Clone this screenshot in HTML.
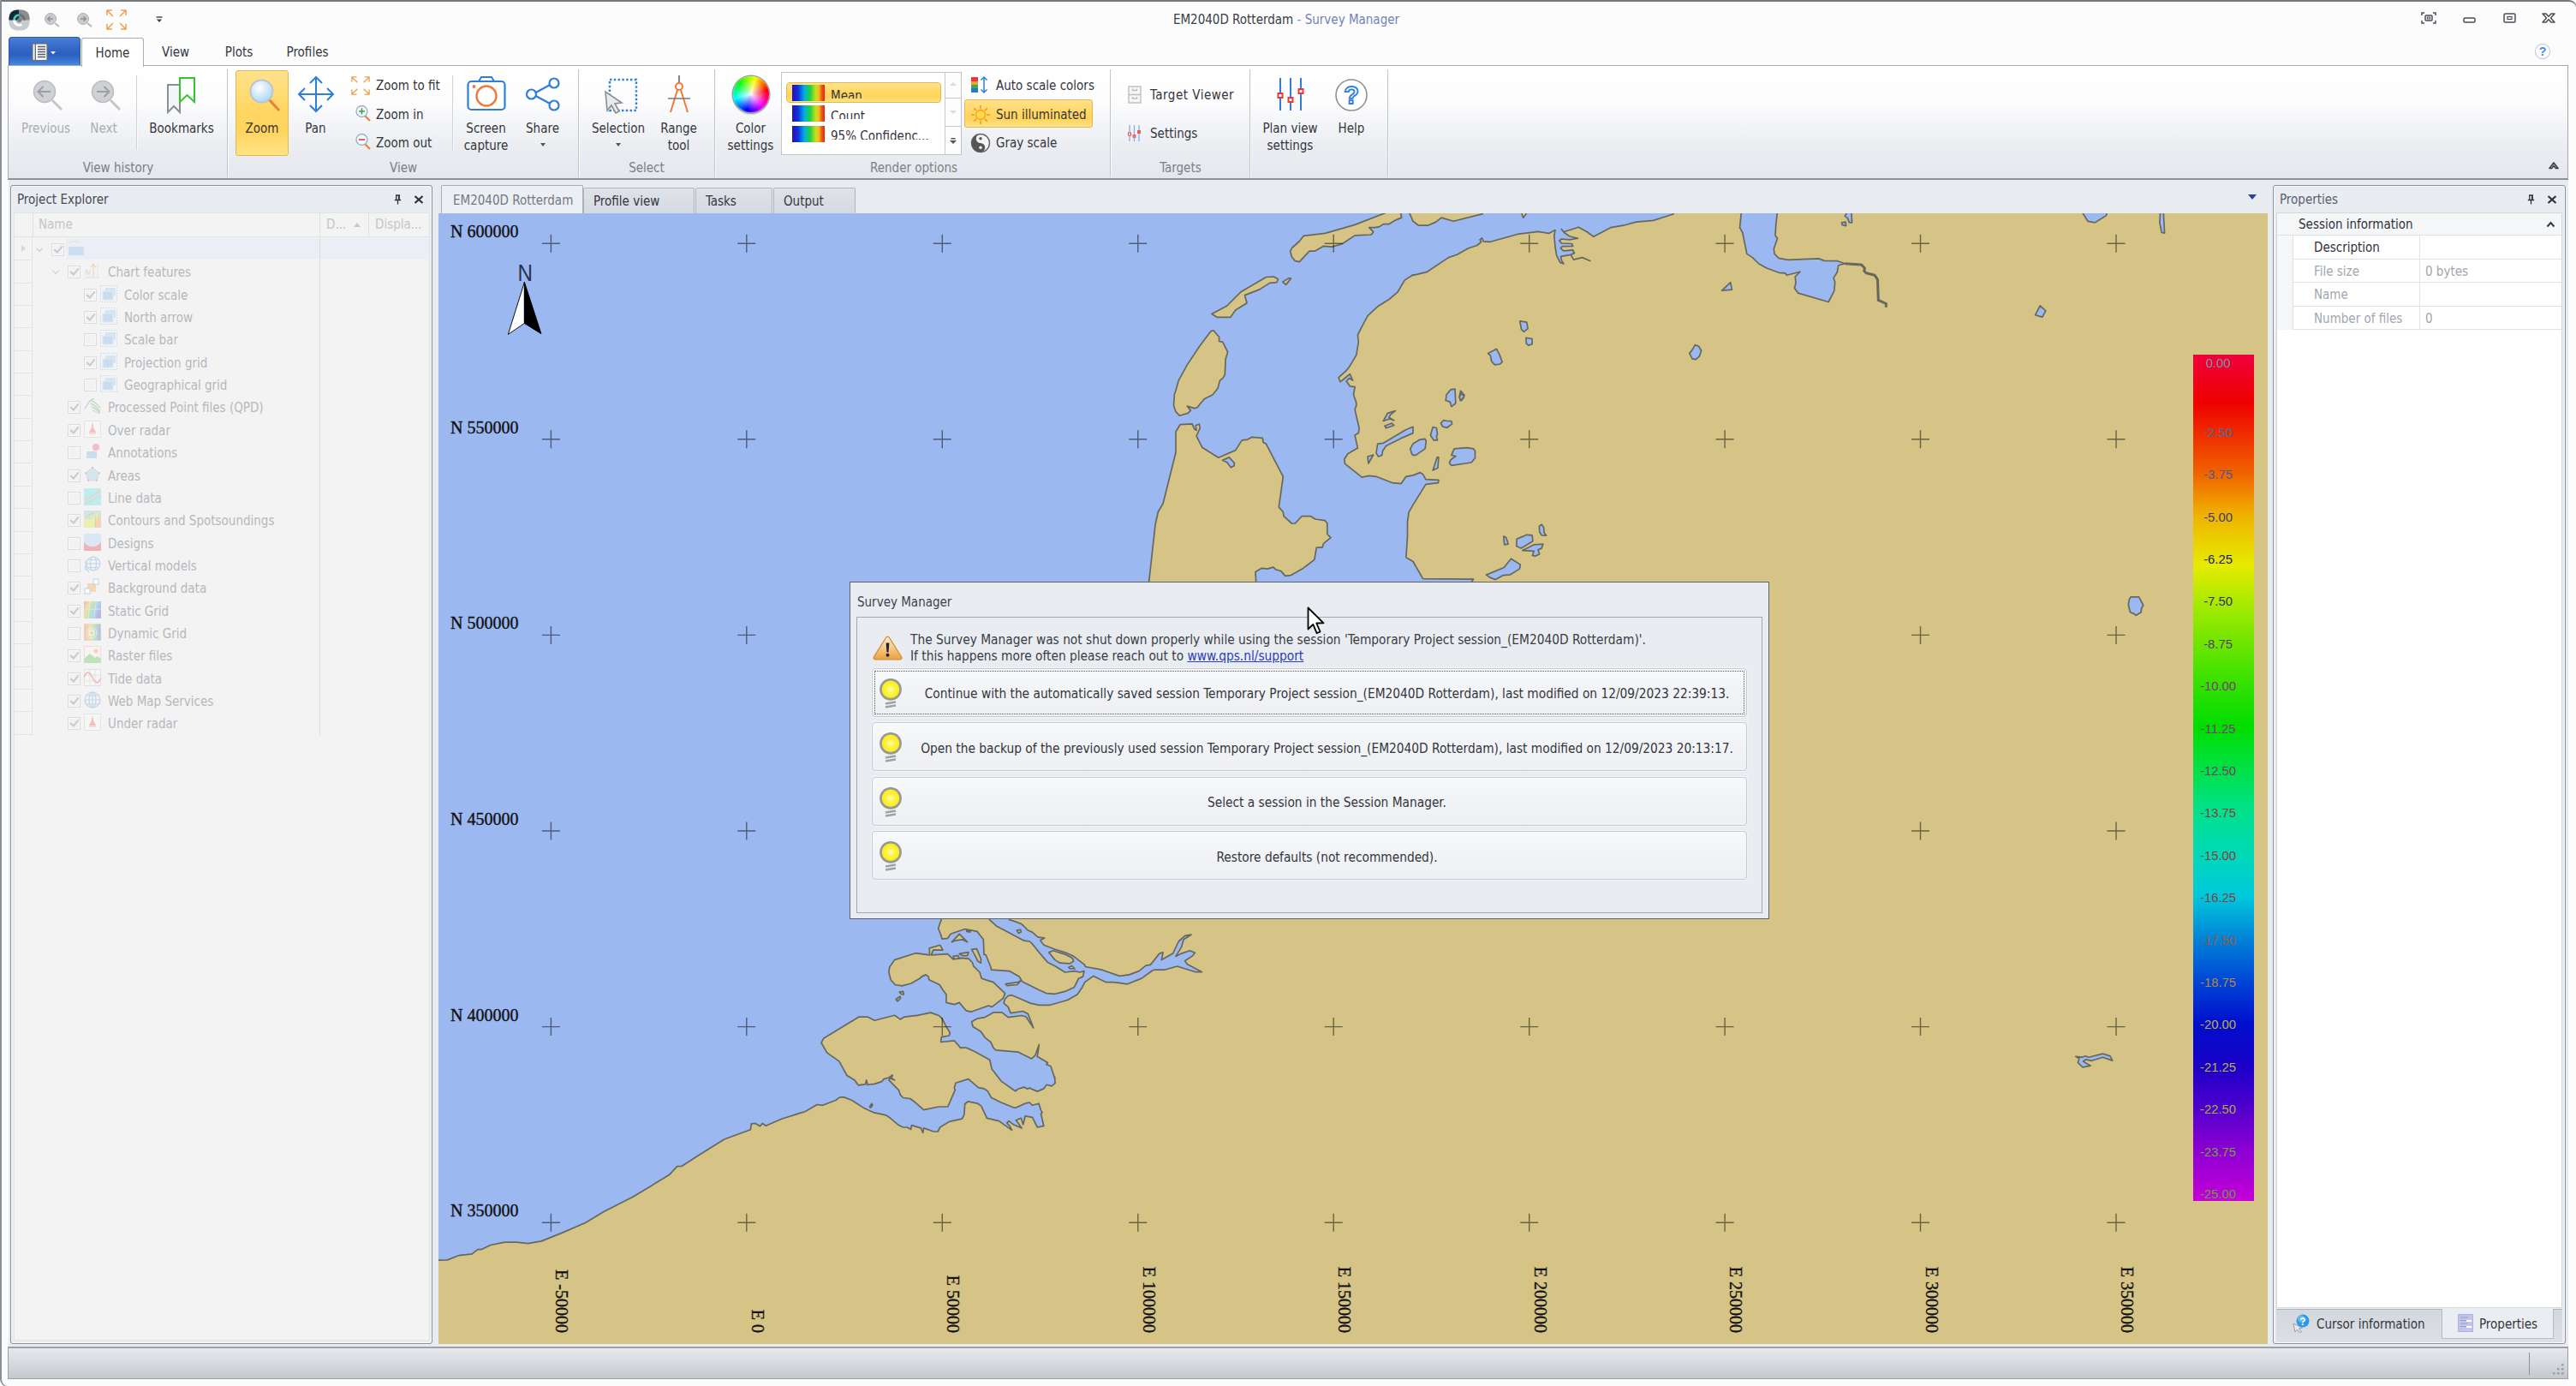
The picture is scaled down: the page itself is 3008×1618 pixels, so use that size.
<!DOCTYPE html><html><head><meta charset="utf-8"><title>Survey Manager</title><style>
html,body{margin:0;padding:0;background:#fcfcfc}
body{width:3008px;height:1618px;position:relative;overflow:hidden;font-family:"DejaVu Sans Condensed","Liberation Sans",sans-serif;font-size:15px}
.map{position:absolute}
#cs{position:absolute;font-family:"Liberation Sans",sans-serif;font-size:14.8px}
#cs span{position:absolute;left:-6.5px;width:100%;text-align:center;line-height:20px}

#frame{position:absolute;left:0;top:0;width:3006px;height:1616px;border:1px solid #9a9da2;border-top:2px solid #74787e;border-left:2px solid #8b8f95;border-radius:0 9px 0 9px;background:#fcfcfc}
#titlebar{position:absolute;left:0;top:0;width:3008px;height:44px}
.ttl{position:absolute;left:1102px;top:13px;width:800px;text-align:center;font-size:15px;line-height:20px;white-space:pre}
#tabs{position:absolute;left:0;top:44px;width:3008px;height:33px}
.filebtn{position:absolute;left:10px;top:-1px;width:84px;height:33px;border:1px solid #2a57ae;border-bottom:none;border-radius:4px 4px 0 0;background:linear-gradient(#4a7ed6,#3367c6 40%,#2c5fbe 62%,#4787e0);box-sizing:border-box}
.filebtn svg{position:absolute;left:26px;top:6px}
.tab{position:absolute;top:0;height:33px;line-height:34.5px;text-align:center;font-size:15px;color:#33363c;box-sizing:border-box}
.tab.act{border:1px solid #a9adb4;border-bottom:none;background:#fff;border-radius:3px 3px 0 0;height:34px;z-index:3}
#ribbon{position:absolute;left:9px;top:76px;width:2990px;height:134px;border:1px solid #a4a8af;border-bottom:2px solid #8d9198;box-sizing:border-box;background:linear-gradient(#fff 0,#fdfdfe 30%,#eceef2 70%,#e4e7ec 100%);font-size:15px;color:#33363c}
.gsep{position:absolute;top:4px;height:126px;width:1px;background:#c2c6cc;box-shadow:1px 0 0 #fafbfc}
.isep{position:absolute;top:11px;height:87px;width:1px;background:#d0d3d8;box-shadow:1px 0 0 #fafbfc}
.glab{position:absolute;top:109.5px;width:200px;text-align:center;line-height:19px;color:#7b7f87;white-space:nowrap}
.big{position:absolute;top:1px;width:120px;height:110px;text-align:center}
.big .ic{position:absolute;left:0;top:7px;width:120px;height:50px;display:flex;align-items:center;justify-content:center}
.big .lb{position:absolute;left:0;top:63px;width:120px;line-height:19.5px;white-space:nowrap}
.big.dis .lb{color:#a9adb3}
.dd{display:inline-block;width:0;height:0;border:3.5px solid transparent;border-top:4px solid #555;border-bottom:none;vertical-align:middle;position:relative;top:-1.5px}
.hl{position:absolute;border:1px solid #e3b851;border-radius:3px;background:linear-gradient(#ffe28c,#ffd764 45%,#ffd35c 70%,#ffe385);box-sizing:border-box}
.sm{position:absolute;height:26px;line-height:26px;white-space:nowrap}
.sm svg{position:absolute;left:0;top:1px}
.sm span{position:absolute;left:30px;top:0}
.sm.tv span{left:29px}
.wheel{width:42px;height:42px;border-radius:50%;background:radial-gradient(circle,#fff 0,rgba(255,255,255,.75) 12%,rgba(255,255,255,0) 60%),conic-gradient(from 75deg,#f00,#f0f,#00f,#0ff,#0f0,#ff0,#f00);box-shadow:0 0 0 1.5px #9a9da2,0 2px 2px #888}
.gal{position:absolute;left:902px;top:6.5px;width:211px;height:97px;border:1px solid #bfc3ca;background:#fff;box-sizing:border-box;overflow:hidden}
.gsel{position:absolute;left:5px;top:11px;width:181px;height:24px;border:1px solid #e3b851;border-radius:4px;box-sizing:border-box;background:linear-gradient(#ffe28c,#ffd764 45%,#ffd35c 70%,#ffe385)}
.gw{position:absolute;left:12px;width:38px;height:19px;background:linear-gradient(90deg,#2a10b0,#1030e0 18%,#00b0e0 38%,#20d040 55%,#c0e020 72%,#f0c020 82%,#f06010 90%,#e02020)}
.gt{position:absolute;left:57px;line-height:18px;overflow:hidden;white-space:nowrap}
.gsc{position:absolute;right:0;top:0;width:18px;height:95px;border-left:1px solid #c5c9cf;background:#fdfdfe}
.gsc b{position:absolute;left:0;width:18px;border-bottom:1px solid #c5c9cf;box-sizing:border-box}
.gsc u{position:absolute;left:5px;top:50%;width:0;height:0;border:4px solid transparent}
.gsc .up{border-bottom:4px solid #d9dbdf;margin-top:-7px}
.gsc .dn{border-top:4px solid #d9dbdf;margin-top:-2px}
.gsc .mo{border-top:4px solid #555;margin-top:0;box-shadow:0 -3px 0 -1.5px #fff,0 -4.5px 0 -1.5px #555}

#work{position:absolute;left:10px;top:210px;width:2989px;height:1363px;background:#e8ebf0}
#lp,#rp{position:absolute;top:216px;height:1353px;border:1px solid #8d929a;border-radius:3px;background:#e9ecf1;box-sizing:border-box;box-shadow:inset 0 0 0 1px #f6f7f9;font-size:15px}
#lp{left:12px;width:493px}
#rp{left:2654px;width:342px}
.ph{position:absolute;left:7px;top:6px;line-height:20px;color:#474b55}
#rp .ph{color:#5b6072}
.pin{position:absolute;width:9px;height:12px}
.tree{position:absolute;left:3px;top:31px;width:486px;height:1317px;background:#f3f3f3;border:1px solid #e2e4e8;box-sizing:border-box;overflow:hidden}
.th{position:absolute;left:0;top:0;width:486px;height:28px;border-bottom:1px solid #e0e1e4;box-sizing:border-box;color:#c3c6cb}
.th span{position:absolute;top:3px;line-height:20px}
.th b{position:absolute;top:0;width:1px;height:27px;background:#e0e1e4}
.sa{position:absolute;left:396px;top:11px;border:4px solid transparent;border-bottom:5px solid #c6c9ce;border-top:none}
.rows{position:absolute;left:0;top:29px;width:486px;height:581px}
.tr{position:absolute;left:0;width:486px;height:26.35px;color:#b5b8bd;white-space:nowrap}
.tr::before{content:"";position:absolute;left:0;top:0;width:21px;height:26.35px;border-right:1px solid #e2e3e6;border-bottom:1px solid #e2e3e6;box-sizing:border-box}
.tr span{position:absolute;top:4px;line-height:20px}
.tr .sel{position:absolute;left:60px;top:0;width:426px;height:25px;background:#ebeff5}
.ex{position:absolute;left:8px;top:8px;border:4.5px solid transparent;border-left:5px solid #d4d6da;border-right:none}
.cv{position:absolute;top:9px;width:6px;height:6px;border-right:1.6px solid #c8cace;border-bottom:1.6px solid #c8cace;transform:rotate(45deg) scale(.95);box-sizing:border-box}
.cb{position:absolute;top:6px;width:15px;height:15px;border:1px solid #dcdde0;background:#f2f2f2;box-sizing:border-box;box-shadow:inset 0 0 0 1px #f8f8f8}
.cb.on::after{content:"";position:absolute;left:4px;top:0px;width:4px;height:8px;border-right:2px solid #c9cacd;border-bottom:2px solid #c9cacd;transform:rotate(40deg)}
.ico{position:absolute;top:2px;width:20px;height:20px}
.ico svg{width:20px;height:20px;display:block;opacity:.85}
.vline{position:absolute;left:356px;top:0;width:1px;height:580px;background:#dcdde0}
#ctabs{position:absolute;left:512px;top:216px;width:2136px;height:34px;font-size:15px}
.ct{position:absolute;top:3px;height:30px;line-height:31px;padding-left:11px;box-sizing:border-box;border:1px solid #b1b5bd;border-bottom:none;background:linear-gradient(#dfe2e8,#d5d9e0);color:#33363c;border-radius:2px 2px 0 0}
.ct.act{top:0;height:34px;line-height:35px;padding-left:13px;background:#eceff3;color:#737885;border-color:#a9adb5}
.pg{position:absolute;left:3px;top:31px;width:334px;height:1279px;background:#fff;border:1px solid #d4d7dc;box-sizing:border-box;overflow:hidden}
.cat{position:absolute;left:0;top:0;width:334px;height:26px;line-height:27px;padding-left:25px;box-sizing:border-box;background:#f5f6f8;color:#2f3238;border-bottom:1px solid #dfe1e5}
.pr{position:absolute;left:0;width:334px;height:27.5px;border-bottom:1px solid #dfe1e5;box-sizing:border-box}
.pr::before{content:"";position:absolute;left:0;top:0;width:19px;height:27.5px;background:#f5f6f8;border-right:1px solid #dfe1e5;box-sizing:border-box}
.pr .n{position:absolute;left:43px;top:4px;line-height:20px;color:#a2a6ae}
.pr .n.dk{color:#2f3040}
.pr .v{position:absolute;left:166px;top:0;height:26px;line-height:28px;padding-left:6px;border-left:1px solid #dfe1e5;color:#a2a6ae}
.btabs{position:absolute;left:3px;top:1311px;width:334px;height:38px;background:linear-gradient(#d3d7de,#dcdfe5);border-top:1px solid #aeb2ba}
.bt{position:absolute;top:0;height:34px;color:#33363c;white-space:nowrap}
.bt.act span{top:8px}.bt.act{background:#eaedf1;border:1px solid #b7bbc3;border-top:none;box-sizing:border-box;top:-1px;height:35px}
.bt svg{position:absolute}
.bt span{position:absolute;top:7px;line-height:20px}
#sb{position:absolute;left:9px;top:1572px;width:2990px;height:38px;border:1px solid #9a9ea6;border-top:2px solid #9da1a9;box-sizing:border-box;background:linear-gradient(#e6e8ec,#d9dce1 40%,#c4c7cd)}
#sb .sep{position:absolute;left:2943px;top:5px;width:1px;height:26px;background:#8e9299}
#dlg{position:absolute;left:992px;top:679px;width:1074px;height:394px;border:1px solid #5f646c;background:#e9ecf0;box-sizing:border-box;font-size:15px;color:#33363c}
.dt{position:absolute;left:8px;top:13px;line-height:20px;color:#3f434b}
.di{position:absolute;left:7px;top:40px;width:1058px;height:346px;font-size:15.3px;border:1px solid #a3a7ae;box-sizing:border-box;background:#e9ecf0}
.wi{position:absolute;left:18px;top:20.5px}
.msg{position:absolute;left:62px;top:17px;line-height:19.2px;white-space:nowrap;color:#3a3d44}
.msg u{color:#2a3fb8}
.db{position:absolute;left:17px;width:1022px;height:57px;border:1px solid #c6cad1;border-radius:4px;box-sizing:border-box;background:linear-gradient(#f8f9fb,#f1f3f6 50%,#eef0f4);box-shadow:0 0 0 1px #f4f5f7}
.db.foc::after{content:"";position:absolute;left:2px;top:2px;right:2px;bottom:2px;border:1px dotted #555}
.bi{position:absolute;left:7.2px;top:10px}
.db span{position:absolute;left:41px;right:0;top:19.5px;line-height:20px;text-align:center;white-space:nowrap}
#cur{position:absolute;left:1526px;top:708px}
</style></head><body>
<div id="frame"></div>
<div id="titlebar">
  <svg style="position:absolute;left:10px;top:11px" width="25" height="25" viewBox="0 0 25 25"><defs><clipPath id="ai"><rect x="0.5" y="0.5" width="24" height="24" rx="9"/></clipPath></defs><g clip-path="url(#ai)"><rect width="25" height="25" fill="#c9cacc"/><rect width="12.5" height="12.5" fill="#0e2b3f"/><rect x="12.5" width="12.5" height="12.5" fill="#8b8e91"/><path d="M12.5,6.5a6,6 0 0 0 -6,6" stroke="#3fd0b6" stroke-width="2.6" fill="none"/><path d="M6.5,12.5a6,6 0 0 0 9,5.2" stroke="#fff" stroke-width="2.6" fill="none"/><path d="M12.5,6.5a6,6 0 0 1 6,6" stroke="#6d7073" stroke-width="2.6" fill="none"/><circle cx="12.5" cy="12.5" r="2.6" fill="#7d8083"/></g></svg>
  <svg style="position:absolute;left:51px;top:14px" width="20" height="18" viewBox="0 0 20 18"><circle cx="8" cy="8" r="6.5" fill="#c9cbce" stroke="#aeb1b5"/><path d="M13,13l5,4" stroke="#b5b8bc" stroke-width="2"/><path d="M11,8H5M7.5,5.2L4.7,8l2.8,2.8" stroke="#8e9196" stroke-width="1.4" fill="none"/></svg>
  <svg style="position:absolute;left:89px;top:14px" width="20" height="18" viewBox="0 0 20 18"><circle cx="8" cy="8" r="6.5" fill="#c9cbce" stroke="#aeb1b5"/><path d="M13,13l5,4" stroke="#b5b8bc" stroke-width="2"/><path d="M5,8h6M8.5,5.2L11.3,8l-2.8,2.8" stroke="#8e9196" stroke-width="1.4" fill="none"/></svg>
  <svg style="position:absolute;left:124px;top:11px" width="24" height="24" viewBox="0 0 24 24" fill="none" stroke="#f0a050" stroke-width="1.5"><path d="M1,7V1h6M1,1l7,7M17,1h6v6M23,1l-7,7M1,17v6h6M1,23l7-7M23,17v6h-6M23,23l-7-7"/></svg>
  <svg style="position:absolute;left:182px;top:19px" width="8" height="8" viewBox="0 0 8 8"><path d="M0.5,1h7" stroke="#444" stroke-width="1.4"/><path d="M0.8,3.5h6.4L4,7z" fill="#444"/></svg>
  <div class="ttl"><span style="color:#3a3d44">EM2040D Rotterdam</span><span style="color:#7f8db3"> - </span><span style="color:#6f84b6">Survey Manager</span></div>
  <svg style="position:absolute;left:2827px;top:14px" width="18" height="14" viewBox="0 0 18 14" fill="none" stroke="#4a4e55" stroke-width="1.5"><path d="M1,4V1h3M14,1h3v3M17,10v3h-3M4,13H1v-3"/><rect x="5" y="4" width="8" height="6" rx="1"/><rect x="7.3" y="6" width="3.4" height="2" stroke-width="1"/></svg>
  <svg style="position:absolute;left:2876px;top:20px" width="15" height="7" viewBox="0 0 15 7" fill="none" stroke="#4a4e55" stroke-width="1.5"><rect x="1" y="1" width="13" height="5" rx="1.5"/></svg>
  <svg style="position:absolute;left:2923px;top:15px" width="15" height="12" viewBox="0 0 15 12" fill="none" stroke="#4a4e55" stroke-width="1.5"><rect x="1" y="1" width="13" height="10" rx="1.5"/><rect x="5" y="4.5" width="5" height="3" stroke-width="1.2"/></svg>
  <svg style="position:absolute;left:2968px;top:15px" width="16" height="12" viewBox="0 0 16 12" fill="none" stroke="#4a4e55" stroke-width="1.5" stroke-linejoin="round"><path d="M1,1h4l3,3.3L11,1h4l-4.5,5L15,11h-4L8,7.7 5,11H1l4.5-5z"/></svg>
</div>
<div id="tabs">
  <div class="filebtn"><svg width="30" height="22" viewBox="0 0 30 22"><rect x="1" y="1" width="17" height="19.5" fill="#fafbfd" stroke="#6a6d72" stroke-width="1.2"/><path d="M4.3,1v19.5" stroke="#6a6d72" stroke-width="1.4"/><path d="M7,4.5h9M7,7.5h9M7,10.5h9M7,13.5h9M7,16.5h9" stroke="#555a63" stroke-width="1.3"/><path d="M22,10h6l-3,3.4z" fill="#f4f6fa"/></svg></div>
  <div class="tab act" style="left:95px;width:73px">Home</div>
  <div class="tab" style="left:168px;width:74px">View</div>
  <div class="tab" style="left:242px;width:74px">Plots</div>
  <div class="tab" style="left:316px;width:86px">Profiles</div>
  <svg style="position:absolute;left:2959px;top:6px" width="20" height="20" viewBox="0 0 20 20"><circle cx="10" cy="10" r="8.6" fill="#fdfdff" stroke="#c9cdd6" stroke-width="1.2"/><text x="10" y="15" font-size="14" font-weight="bold" text-anchor="middle" fill="#3a8ee6" font-family="Liberation Sans, sans-serif">?</text></svg>
</div>
<div id="ribbon">
<div class="gsep" style="left:255px"></div>
<div class="gsep" style="left:664.5px"></div>
<div class="gsep" style="left:824px"></div>
<div class="gsep" style="left:1286px"></div>
<div class="gsep" style="left:1448.5px"></div>
<div class="gsep" style="left:1610px"></div>
<div class="isep" style="left:149px"></div>
<div class="isep" style="left:518px"></div>
<div class="glab" style="left:28px">View history</div>
<div class="glab" style="left:361px">View</div>
<div class="glab" style="left:645px">Select</div>
<div class="glab" style="left:957px">Render options</div>
<div class="glab" style="left:1268.5px">Targets</div>
<div class="big dis" style="left:-16.5px"><div class="ic"><svg style="margin-top:3px;margin-left:5px" width="38" height="40" viewBox="0 0 38 40"><circle cx="15" cy="15" r="12.5" fill="#cfd1d4" stroke="#b9bcc0" stroke-width="1.5"/><path d="M24,25l11,11" stroke="#c4c6ca" stroke-width="3"/><path d="M22,15H8M13.5,9L7.5,15l6,6" stroke="#9c9fa4" stroke-width="2" fill="none"/></svg></div><div class="lb">Previous</div></div>
<div class="big dis" style="left:51px"><div class="ic"><svg style="margin-top:3px;margin-left:5px" width="38" height="40" viewBox="0 0 38 40"><circle cx="15" cy="15" r="12.5" fill="#cfd1d4" stroke="#b9bcc0" stroke-width="1.5"/><path d="M24,25l11,11" stroke="#c4c6ca" stroke-width="3"/><path d="M8,15h14M16.5,9l6,6-6,6" stroke="#9c9fa4" stroke-width="2" fill="none"/></svg></div><div class="lb">Next</div></div>
<div class="big " style="left:142px"><div class="ic"><svg style="margin-top:1px" width="36" height="44" viewBox="0 0 36 44" fill="none" stroke-width="2"><path d="M2,10h14v32l-7-7-7,7z" stroke="#8c8f94" fill="#f4f5f7"/><path d="M16,2h17v28l-8.5-8-8.5,8z" stroke="#33c52e" fill="#fbfffb"/></svg></div><div class="lb">Bookmarks</div></div>
<div class="hl" style="left:265px;top:5px;width:62px;height:100px"></div>
<div class="big " style="left:236px"><div class="ic"><svg style="margin-top:3.5px;margin-left:5px" width="38" height="42" viewBox="0 0 38 42"><defs><radialGradient id="zg" cx=".4" cy=".35" r=".7"><stop offset="0" stop-color="#fff"/><stop offset="1" stop-color="#a9d4f3"/></radialGradient></defs><path d="M24,25l12,13" stroke="#e8823a" stroke-width="3.2"/><circle cx="15.5" cy="15.5" r="13" fill="url(#zg)" stroke="#b9c6d2" stroke-width="2"/></svg></div><div class="lb">Zoom</div></div>
<div class="big " style="left:298.5px"><div class="ic"><svg width="44" height="44" viewBox="0 0 44 44" fill="none" stroke="#2f7fd8" stroke-width="2"><path d="M22,2v40M2,22h40M15,9l7-7 7,7M15,35l7,7 7-7M9,15l-7,7 7,7M35,15l7,7-7,7"/></svg></div><div class="lb">Pan</div></div>
<div class="big " style="left:497.5px"><div class="ic"><svg style="margin-top:-2px" width="46" height="42" viewBox="0 0 46 42" fill="none"><path d="M14,7l3-5h12l3,5" stroke="#2f7fd8" stroke-width="2"/><rect x="1.5" y="7" width="43" height="33" rx="4" stroke="#2f7fd8" stroke-width="2.2" fill="#fff"/><circle cx="23" cy="24" r="11.5" stroke="#f07a3c" stroke-width="2.4"/><circle cx="8.5" cy="13" r="2" fill="#f07a3c"/></svg></div><div class="lb">Screen<br>capture</div></div>
<div class="big " style="left:563.5px"><div class="ic"><svg width="42" height="40" viewBox="0 0 42 40" fill="none" stroke="#2f7fd8" stroke-width="2.2"><path d="M9,20L33,7M9,20l24,13"/><circle cx="34" cy="7" r="5.5" fill="#fff"/><circle cx="7.5" cy="20" r="5.5" fill="#fff"/><circle cx="34" cy="33" r="5.5" fill="#fff"/></svg></div><div class="lb">Share<br><span class="dd"></span></div></div>
<div class="big " style="left:652px"><div class="ic"><svg style="margin-top:3px;margin-left:6px" width="40" height="42" viewBox="0 0 40 42" fill="none"><rect x="7" y="2" width="31" height="36" stroke="#2f7fd8" stroke-width="2.4" stroke-dasharray="2.4 2.4"/><path d="M2,16l2,22 5-6 5,9 4-2-5-9 8-1z" fill="#e9eaec" stroke="#8a8d92" stroke-width="1.6"/></svg></div><div class="lb">Selection<br><span class="dd"></span></div></div>
<div class="big " style="left:722.5px"><div class="ic"><svg width="30" height="46" viewBox="0 0 30 46" fill="none"><path d="M15,1v9" stroke="#666" stroke-width="1.6"/><circle cx="15" cy="14" r="4" stroke="#f07a3c" stroke-width="2"/><path d="M13,18L5,44M17,18l8,26" stroke="#f07a3c" stroke-width="2"/><path d="M2,28h26" stroke="#777" stroke-width="1.5"/></svg></div><div class="lb">Range<br>tool</div></div>
<div class="big " style="left:806.5px"><div class="ic"><div class="wheel"></div></div><div class="lb">Color<br>settings</div></div>
<div class="big " style="left:1436.5px"><div class="ic"><svg width="34" height="42" viewBox="0 0 34 42" fill="none"><path d="M5,2v38M17,2v38M29,2v38" stroke="#2f7fd8" stroke-width="2"/><rect x="2.5" y="20" width="5" height="5" fill="#fff" stroke="#e8383c" stroke-width="2"/><rect x="14.5" y="25" width="5" height="5" fill="#fff" stroke="#e8383c" stroke-width="2"/><rect x="26.5" y="15" width="5" height="5" fill="#fff" stroke="#e8383c" stroke-width="2"/></svg></div><div class="lb">Plan view<br>settings</div></div>
<div class="big " style="left:1508px"><div class="ic"><svg style="margin-top:2px" width="40" height="40" viewBox="0 0 40 40"><circle cx="20" cy="20" r="18" fill="#fff" stroke="#8e9196" stroke-width="1.6"/><text x="20" y="30" font-size="29" font-weight="bold" text-anchor="middle" fill="#fff" stroke="#2f7fd8" stroke-width="1.8" font-family="Liberation Sans, sans-serif">?</text></svg></div><div class="lb">Help</div></div>
<div class="sm " style="left:399px;top:10px"><svg style="left:1px;top:2px" width="22" height="22" viewBox="0 0 24 24" fill="none" stroke="#f0a050" stroke-width="1.5"><path d="M1,7V1h6M1,1l7,7M17,1h6v6M23,1l-7,7M1,17v6h6M1,23l7-7M23,17v6h-6M23,23l-7-7"/></svg><span>Zoom to fit</span></div>
<div class="sm " style="left:399px;top:43.5px"><svg style="left:4px" width="24" height="20" viewBox="0 0 24 20"><path d="M13,13l6,6" stroke="#e8823a" stroke-width="2.2"/><circle cx="9.5" cy="8" r="6.5" fill="#f4fbff" stroke="#9fb2c2" stroke-width="1.4"/><path d="M6,8h7M9.5,4.5v7" stroke="#2fa84a" stroke-width="1.6"/></svg><span>Zoom in</span></div>
<div class="sm " style="left:399px;top:77px"><svg style="left:4px" width="24" height="20" viewBox="0 0 24 20"><path d="M13,13l6,6" stroke="#e8823a" stroke-width="2.2"/><circle cx="9.5" cy="8" r="6.5" fill="#f4fbff" stroke="#9fb2c2" stroke-width="1.4"/><path d="M6,8h7" stroke="#e8383c" stroke-width="1.6"/></svg><span>Zoom out</span></div>
<div class="sm w" style="left:1123px;top:10px"><svg width="24" height="22" viewBox="0 0 24 22"><rect x="1" y="2" width="8" height="5" fill="#e8383c"/><rect x="1" y="7" width="8" height="4" fill="#f0a030"/><rect x="1" y="11" width="8" height="4" fill="#38b048"/><rect x="1" y="15" width="8" height="5" fill="#2f6fd8"/><path d="M16,2v18M12.5,5.5L16,2l3.5,3.5M12.5,16.5L16,20l3.5-3.5" stroke="#2f7fd8" stroke-width="1.5" fill="none"/></svg><span>Auto scale colors</span></div>
<div class="hl" style="left:1116px;top:38.5px;width:150px;height:33px"></div>
<div class="sm w" style="left:1123px;top:43.5px"><svg width="24" height="24" viewBox="0 0 24 24"><g stroke="#f09a20" stroke-width="1.6"><path d="M12,1v4M12,19v4M1,12h4M19,12h4M4.2,4.2l2.9,2.9M16.9,16.9l2.9,2.9M4.2,19.8l2.9-2.9M16.9,7.1l2.9-2.9"/></g><circle cx="12" cy="12" r="5.5" fill="#ffd84a" stroke="#f0a020" stroke-width="1.3"/></svg><span>Sun illuminated</span></div>
<div class="sm w" style="left:1123px;top:77px"><svg width="24" height="24" viewBox="0 0 24 24"><circle cx="12" cy="12" r="10.5" fill="#f4f4f4" stroke="#666" stroke-width="1.4"/><path d="M12,1.5a10.5,10.5 0 0 0 0,21a5.25,5.25 0 0 0 0-10.5a5.25,5.25 0 0 1 0-10.5z" fill="#555"/><circle cx="12" cy="6.7" r="1.7" fill="#555"/><circle cx="12" cy="17.3" r="1.7" fill="#f4f4f4"/></svg><span>Gray scale</span></div>
<div class="sm tv" style="left:1304px;top:21px"><svg style="left:3px;top:2px" width="16" height="21" viewBox="0 0 16 21" fill="none" stroke="#bbbec2" stroke-width="1.4"><rect x="1" y="1" width="14" height="19" fill="#f6f6f7"/><path d="M1,10.5h14M5.5,3.5v2h5v-2M5.5,13v2h5v-2"/></svg><span><em style="font-style:normal;letter-spacing:.5px">Target Viewer</em></span></div>
<div class="sm tv" style="left:1304px;top:66px"><svg style="left:3px;top:3px" width="15" height="20" viewBox="0 0 15 20" fill="none"><path d="M2,0v19M7.5,0v19M13,0v19" stroke="#7fb0e8" stroke-width="1.3"/><rect x=".5" y="9" width="3" height="3" fill="#fff" stroke="#e8484c"/><rect x="5.5" y="11" width="4" height="4" fill="#ec6a6e"/><rect x="11" y="6" width="4" height="4" fill="#ec5a5e"/></svg><span>Settings</span></div>
<div class="gal"><div class="gsel"></div><i class="gw" style="top:14px"></i><i class="gw" style="top:38px"></i><i class="gw" style="top:62px"></i>
<span class="gt" style="top:18px;height:12.8px">Mean</span><span class="gt" style="top:42px;height:12.5px">Count</span><span class="gt" style="top:65.5px;height:13px">95% Confidenc...</span>
<div class="gsc"><b style="top:0;height:30.5px"><u class="up"></u></b><b style="top:30.5px;height:32.5px"><u class="dn"></u></b><b style="top:63px;height:33px"><u class="mo"></u></b></div></div>
<svg style="position:absolute;left:2966px;top:111px" width="12" height="10" viewBox="0 0 12 10" fill="none" stroke="#3a3d44" stroke-width="1.6" stroke-linejoin="round"><path d="M1,8.5l5-6.5 5,6.5h-2.6L6,5.4 3.6,8.5z"/></svg>
</div><div id="work"></div><div id="lp"><div class="ph">Project Explorer</div>
<svg class="pin" style="left:447px;top:10px" viewBox="0 0 9 12"><path d="M2,1h5M2.8,1v5M6.2,1v5M0.8,6.5h7.4M4.5,6.5v5" stroke="#2d3036" stroke-width="1.3" fill="none"/><path d="M5,1.5h1v4.5h-1z" fill="#2d3036"/></svg>
<svg class="pin" style="left:470px;top:11px;width:12px;height:10px" viewBox="0 0 12 10"><path d="M1.5,1l9,8M10.5,1l-9,8" stroke="#2d3036" stroke-width="2.2"/></svg>
<div class="tree"><div class="th"><span style="left:28px">Name</span><span style="left:364px">D...</span><i class="sa"></i><span style="left:421px">Displa...</span>
<b style="left:21px"></b><b style="left:356px"></b><b style="left:413px"></b></div>
<div class="rows">
<div class="tr" style="top:0.00px"><div class="sel"></div><i class="ex"></i><i class="cv" style="left:26px"></i><i class="cb on" style="left:43px"></i><i class="ico" style="left:62px"><svg viewBox="0 0 20 20"><path d="M2,4l2-2h7l1,2" fill="#f4f4f4" stroke="#d8d8d8"/><rect x="1" y="8" width="18" height="10" fill="#c7dcef"/></svg></i></div>
<div class="tr" style="top:26.35px"><i class="cv" style="left:45px"></i><i class="cb on" style="left:62px"></i><i class="ico" style="left:81px"><svg viewBox="0 0 20 20"><path d="M1,18h17" stroke="#ddd"/><text x="1" y="15" font-size="9" fill="#d0d0d0" font-family="Liberation Sans, sans-serif">N</text><path d="M11,18V2M8,6l3-4 3,4" stroke="#f4d3b0" fill="none" stroke-width="1.3"/><path d="M16,0v19" stroke="#e4e4e4"/></svg></i><span style="left:109px">Chart features</span></div>
<div class="tr" style="top:52.70px"><i class="cb on" style="left:81px"></i><i class="ico" style="left:100px"><svg viewBox="0 0 20 20"><rect x=".5" y=".5" width="19" height="19" fill="none" stroke="#bcd6ee" stroke-dasharray="1.5 1.5"/><rect x="6" y="3" width="12" height="9" fill="#cfe2f3"/><rect x="3" y="7" width="12" height="10" fill="#c3daf0" stroke="#dbe9f6"/></svg></i><span style="left:128px">Color scale</span></div>
<div class="tr" style="top:79.05px"><i class="cb on" style="left:81px"></i><i class="ico" style="left:100px"><svg viewBox="0 0 20 20"><rect x=".5" y=".5" width="19" height="19" fill="none" stroke="#bcd6ee" stroke-dasharray="1.5 1.5"/><rect x="6" y="3" width="12" height="9" fill="#cfe2f3"/><rect x="3" y="7" width="12" height="10" fill="#c3daf0" stroke="#dbe9f6"/></svg></i><span style="left:128px">North arrow</span></div>
<div class="tr" style="top:105.40px"><i class="cb" style="left:81px"></i><i class="ico" style="left:100px"><svg viewBox="0 0 20 20"><rect x=".5" y=".5" width="19" height="19" fill="none" stroke="#bcd6ee" stroke-dasharray="1.5 1.5"/><rect x="6" y="3" width="12" height="9" fill="#cfe2f3"/><rect x="3" y="7" width="12" height="10" fill="#c3daf0" stroke="#dbe9f6"/></svg></i><span style="left:128px">Scale bar</span></div>
<div class="tr" style="top:131.75px"><i class="cb on" style="left:81px"></i><i class="ico" style="left:100px"><svg viewBox="0 0 20 20"><rect x=".5" y=".5" width="19" height="19" fill="none" stroke="#bcd6ee" stroke-dasharray="1.5 1.5"/><rect x="6" y="3" width="12" height="9" fill="#cfe2f3"/><rect x="3" y="7" width="12" height="10" fill="#c3daf0" stroke="#dbe9f6"/></svg></i><span style="left:128px">Projection grid</span></div>
<div class="tr" style="top:158.10px"><i class="cb" style="left:81px"></i><i class="ico" style="left:100px"><svg viewBox="0 0 20 20"><rect x=".5" y=".5" width="19" height="19" fill="none" stroke="#bcd6ee" stroke-dasharray="1.5 1.5"/><rect x="6" y="3" width="12" height="9" fill="#cfe2f3"/><rect x="3" y="7" width="12" height="10" fill="#c3daf0" stroke="#dbe9f6"/></svg></i><span style="left:128px">Geographical grid</span></div>
<div class="tr" style="top:184.45px"><i class="cb on" style="left:62px"></i><i class="ico" style="left:81px"><svg viewBox="0 0 20 20" fill="none"><path d="M1,13C6,4 9,1 12,2" stroke="#c7cdea" stroke-width="1.6"/><path d="M7,3c5,1 8,5 12,9M8,7c4,1 7,5 11,9M9,11c4,1 6,4 10,7" stroke="#b8d8b8" stroke-width="1.4"/><path d="M10,15c3,1 5,2 8,4" stroke="#d8d8d8" stroke-width="1.4"/></svg></i><span style="left:109px">Processed Point files (QPD)</span></div>
<div class="tr" style="top:210.80px"><i class="cb on" style="left:62px"></i><i class="ico" style="left:81px"><svg viewBox="0 0 20 20"><rect x=".5" y=".5" width="19" height="19" fill="#f7f7f7" stroke="#e2e2e2"/><path d="M9.3,5h1.4l.4,3.2 3,5.8h-8.2l3-5.8z" fill="#f4b4b9"/><path d="M6,15.2h8" stroke="#f6c4c8" stroke-width="1.3"/><circle cx="10" cy="4.2" r="1" fill="#f2c8cb"/></svg></i><span style="left:109px">Over radar</span></div>
<div class="tr" style="top:237.15px"><i class="cb" style="left:62px"></i><i class="ico" style="left:81px"><svg viewBox="0 0 20 20"><rect x="3" y="10" width="12" height="8" fill="#c3daf0"/><circle cx="14" cy="5" r="4" fill="#f4b5ba"/><path d="M12,8l-4,6" stroke="#e8c8cc"/></svg></i><span style="left:109px">Annotations</span></div>
<div class="tr" style="top:263.50px"><i class="cb on" style="left:62px"></i><i class="ico" style="left:81px"><svg viewBox="0 0 20 20"><path d="M10,2l8,6-3,9H5L2,8z" fill="#cfe3ee" stroke="#d6d6d6"/><path d="M9,1h2v2H9zM17,7h2v2h-2zM1,7h2v2H1zM4,16h2v2H4zM14,16h2v2h-2z" fill="#c8c8c8"/></svg></i><span style="left:109px">Areas</span></div>
<div class="tr" style="top:289.85px"><i class="cb" style="left:62px"></i><i class="ico" style="left:81px"><svg viewBox="0 0 20 20"><rect width="20" height="20" fill="#b6ecec"/><path d="M0,14L20,3M0,19L20,8" stroke="#f0c8c0" stroke-width="1.2"/></svg></i><span style="left:109px">Line data</span></div>
<div class="tr" style="top:316.20px"><i class="cb on" style="left:62px"></i><i class="ico" style="left:81px"><svg viewBox="0 0 20 20"><rect width="20" height="20" fill="#cde6d8" stroke="#ddd"/><path d="M0,20V10c3,-1 5,2 8,0s4,-6 8,-7v17z" fill="#eaf0a0"/><path d="M12,20c0,-6 2,-8 5,-14l3,1v13z" fill="#f2d0a8"/><path d="M2,9c3,-4 6,-5 10,-6M14,6c-2,4 1,6 -1,11" stroke="#c8c8c8" fill="none"/></svg></i><span style="left:109px">Contours and Spotsoundings</span></div>
<div class="tr" style="top:342.55px"><i class="cb" style="left:62px"></i><i class="ico" style="left:81px"><svg viewBox="0 0 20 20"><rect width="20" height="20" fill="#d6e6f3"/><path d="M0,10c5,7 15,7 20,0v10H0z" fill="#f1a5ac"/></svg></i><span style="left:109px">Designs</span></div>
<div class="tr" style="top:368.90px"><i class="cb" style="left:62px"></i><i class="ico" style="left:81px"><svg viewBox="0 0 20 20" fill="none" stroke="#bcd0ea" stroke-width="1.2"><circle cx="11" cy="9" r="8"/><ellipse cx="11" cy="9" rx="3.5" ry="8"/><path d="M3,9h16M4.5,4.5h13M4.5,13.5h13M2,5v12M1,12c2,3 3,5 5,7" /></svg></i><span style="left:109px">Vertical models</span></div>
<div class="tr" style="top:395.25px"><i class="cb on" style="left:62px"></i><i class="ico" style="left:81px"><svg viewBox="0 0 20 20"><rect x="4" y="6" width="10" height="10" fill="#f6d3a8"/><rect x="11" y="1" width="6" height="6" fill="#fff" stroke="#b8cde8"/><rect x="1" y="12" width="6" height="6" fill="#fff" stroke="#b8cde8"/></svg></i><span style="left:109px">Background data</span></div>
<div class="tr" style="top:421.60px"><i class="cb on" style="left:62px"></i><i class="ico" style="left:81px"><svg viewBox="0 0 20 20"><defs><linearGradient id="sg" x1="0" y1="0" x2="1" y2=".4"><stop offset="0" stop-color="#f2b0a8"/><stop offset=".3" stop-color="#f0dca0"/><stop offset=".5" stop-color="#b8e4b0"/><stop offset=".75" stop-color="#a8d4f0"/><stop offset="1" stop-color="#a8b0e0"/></linearGradient></defs><rect width="20" height="20" fill="url(#sg)"/><path d="M7,0L5,20M14,0l-2,20M0,10l20,-1" stroke="#e8e8e8" stroke-opacity=".7"/></svg></i><span style="left:109px">Static Grid</span></div>
<div class="tr" style="top:447.95px"><i class="cb" style="left:62px"></i><i class="ico" style="left:81px"><svg viewBox="0 0 20 20"><defs><linearGradient id="dg" x1="0" y1="0" x2="1" y2="0"><stop offset="0" stop-color="#f2b8a8"/><stop offset=".35" stop-color="#f0e0a8"/><stop offset=".6" stop-color="#b8e4b8"/><stop offset="1" stop-color="#b0b0e8"/></linearGradient></defs><rect width="20" height="20" fill="url(#dg)" stroke="#ddd"/><circle cx="9" cy="11" r="3" fill="none" stroke="#f4f4f4" stroke-width="1.3"/><circle cx="9" cy="11" r="6" fill="none" stroke="#f4f4f4" stroke-opacity=".7"/></svg></i><span style="left:109px">Dynamic Grid</span></div>
<div class="tr" style="top:474.30px"><i class="cb on" style="left:62px"></i><i class="ico" style="left:81px"><svg viewBox="0 0 20 20"><rect x=".5" y=".5" width="19" height="19" fill="#f8f4f2" stroke="#f4d8cc"/><circle cx="14" cy="6" r="2.5" fill="#f6cfa0"/><path d="M0,15l7,-6 6,5 3,-2 4,3v5H0z" fill="#b8e0b0"/></svg></i><span style="left:109px">Raster files</span></div>
<div class="tr" style="top:500.65px"><i class="cb on" style="left:62px"></i><i class="ico" style="left:81px"><svg viewBox="0 0 20 20" fill="none"><rect x=".5" y=".5" width="19" height="19" fill="#f7f7f7" stroke="#e0e0e0"/><path d="M7,0v20M13,0v20M0,7h20M0,14h20" stroke="#e2e2e2"/><path d="M0,10c3,-8 6,-8 10,0s7,8 10,0" stroke="#f2a7ad" stroke-width="1.3"/></svg></i><span style="left:109px">Tide data</span></div>
<div class="tr" style="top:527.00px"><i class="cb on" style="left:62px"></i><i class="ico" style="left:81px"><svg viewBox="0 0 20 20" fill="none" stroke="#bcd0ea" stroke-width="1.2"><circle cx="10" cy="10" r="9"/><ellipse cx="10" cy="10" rx="4" ry="9"/><path d="M1,10h18M3,5h14M3,15h14M10,1v18"/></svg></i><span style="left:109px">Web Map Services</span></div>
<div class="tr" style="top:553.35px"><i class="cb on" style="left:62px"></i><i class="ico" style="left:81px"><svg viewBox="0 0 20 20"><rect x=".5" y=".5" width="19" height="19" fill="#f7f7f7" stroke="#e2e2e2"/><path d="M9.3,5h1.4l.4,3.2 3,5.8h-8.2l3-5.8z" fill="#f4b4b9"/><path d="M6,15.2h8" stroke="#f6c4c8" stroke-width="1.3"/><circle cx="10" cy="4.2" r="1" fill="#f2c8cb"/></svg></i><span style="left:109px">Under radar</span></div>
<div class="vline"></div></div></div></div><div id="ctabs"><div class="ct act" style="left:3px;width:166px">EM2040D Rotterdam</div><div class="ct" style="left:169px;width:130px">Profile view</div><div class="ct" style="left:300px;width:90px">Tasks</div><div class="ct" style="left:391px;width:96px">Output</div>
<i style="position:absolute;left:2113px;top:11px;border:5px solid transparent;border-top:6px solid #2542a8;border-bottom:none"></i></div><svg class="map" style="left:512px;top:249px" width="2136" height="1320" viewBox="512 249 2136 1320">
<rect x="512" y="249" width="2136" height="1320" fill="#d5c486"/>
<g stroke="#66685f" stroke-width="1.7" stroke-linejoin="round">
<path fill="#9bb8f0" d="M506.0,243.0 1955.4,246.6 1955.4,246.6 1953.7,250.0 1930.5,257.4 1910.6,259.1 1895.6,263.2 1880.7,265.7 1860.8,276.2 1853.3,270.7 1843.3,265.2 1825.9,270.7 1823.4,267.4 1826.2,271.2 1832.6,275.7 1842.5,278.2 1832.6,279.8 1823.4,279.0 1820.9,281.0 1823.4,284.0 1835.5,284.5 1836.7,287.3 1824.3,287.6 1822.3,289.8 1825.9,292.8 1836.7,291.8 1838.4,295.6 1834.2,297.3 1828.4,298.4 1822.6,299.4 1823.4,303.9 1825.9,308.0 1821.8,306.4 1817.6,298.1 1816.0,288.1 1814.8,275.7 1816.0,268.5 1808.5,272.4 1796.0,270.4 1772.8,273.2 1740.4,282.3 1732.1,281.8 1730.5,277.8 1728.0,279.8 1729.7,282.3 1724.7,286.5 1714.7,289.8 1701.4,297.3 1691.5,300.6 1665.8,317.7 1650.0,321.3 1650.0,320.8 1640.2,327.1 1631.9,341.2 1622.0,349.5 1608.7,357.8 1597.1,368.6 1589.6,382.7 1585.4,391.0 1586.3,399.3 1583.8,414.3 1580.5,420.1 1575.5,428.4 1572.2,432.5 1563.0,440.8 1565.0,445.8 1572.2,440.0 1576.3,436.7 1579.6,444.1 1575.5,441.6 1572.2,445.0 1576.3,450.8 1582.1,451.6 1580.5,460.7 1583.8,470.0 1583.8,473.3 1582.1,478.3 1587.1,499.8 1586.3,505.6 1582.1,508.1 1585.4,523.1 1573.8,529.7 1569.7,536.3 1570.5,541.3 1590.4,557.1 1598.7,555.4 1607.0,556.3 1626.1,563.7 1636.1,564.6 1641.9,556.3 1650.0,554.9 1658.3,551.6 1661.6,553.8 1664.9,559.6 1679.9,560.4 1679.5,563.7 1664.9,565.4 1650.0,589.4 1645.2,597.7 1643.5,609.4 1643.5,626.0 1641.9,650.8 1650.0,655.5 1661.6,675.7 1720.5,676.1 1716.4,682.4 1716.0,800.0 1600.0,860.0 1500.0,800.0 1466.8,682.4 1466.0,667.4 1473.4,663.3 1480.1,664.1 1486.7,662.1 1490.0,665.0 1495.8,666.6 1500.8,672.4 1507.4,671.6 1520.7,664.1 1534.8,653.3 1537.3,639.2 1544.0,639.2 1545.6,634.3 1553.9,627.6 1549.8,623.5 1549.8,611.0 1547.3,607.7 1535.7,606.0 1530.7,602.7 1519.9,602.7 1512.4,611.0 1508.3,611.0 1499.1,602.7 1498.3,597.7 1493.3,591.9 1498.3,556.3 1478.4,518.1 1475.1,516.4 1474.3,511.4 1461.8,510.3 1456.8,513.1 1450.2,513.9 1442.7,525.6 1422.8,534.2 1403.7,522.2 1397.1,509.0 1401.2,499.8 1400.4,495.2 1396.3,496.5 1397.1,502.3 1394.6,500.7 1392.1,494.9 1378.0,495.7 1373.0,504.0 1373.0,528.0 1358.1,587.8 1352.3,597.7 1349.0,612.7 1341.5,680.7 1325.0,800.0 1290.0,900.0 1230.0,1000.0 1178.0,1060.0 1178.6,1073.7 1185.8,1075.9 1193.1,1078.8 1200.3,1086.0 1205.3,1088.1 1211.8,1093.9 1219.8,1095.1 1214.7,1097.8 1219.0,1103.3 1232.0,1108.3 1243.6,1111.9 1253.7,1116.3 1266.7,1126.4 1267.4,1128.5 1286.9,1132.2 1307.1,1139.4 1318.6,1137.9 1330.0,1133.6 1338.1,1127.2 1343.1,1126.4 1344.7,1124.7 1353.9,1113.1 1358.0,1111.8 1356.3,1120.6 1369.6,1113.1 1376.3,1099.0 1383.7,1092.4 1390.9,1091.2 1382.1,1096.8 1379.6,1105.6 1372.9,1116.4 1379.6,1113.1 1389.5,1109.8 1395.3,1112.3 1392.8,1115.6 1383.7,1121.7 1386.2,1125.6 1403.6,1134.7 1396.2,1134.7 1374.6,1128.0 1359.7,1132.2 1348.0,1132.2 1345.6,1133.0 1333.1,1142.1 1316.5,1148.8 1304.9,1147.1 1299.8,1146.6 1291.2,1146.6 1276.8,1139.4 1266.7,1146.6 1263.8,1152.4 1258.0,1161.0 1246.5,1167.5 1226.2,1173.3 1213.3,1173.3 1203.2,1171.1 1193.1,1166.8 1181.5,1161.7 1177.2,1162.5 1173.6,1166.1 1172.1,1171.1 1177.2,1175.4 1180.1,1182.7 1194.5,1180.5 1200.3,1183.4 1206.8,1200.0 1198.1,1187.0 1193.1,1185.5 1177.2,1187.7 1170.0,1181.9 1159.9,1181.9 1149.8,1187.7 1141.1,1189.1 1134.6,1192.8 1136.1,1198.5 1145.4,1204.3 1149.8,1210.8 1157.0,1216.6 1159.9,1223.1 1162.8,1225.9 1188.7,1228.1 1204.6,1236.0 1208.9,1231.7 1213.3,1219.5 1211.8,1230.3 1211.1,1233.2 1223.4,1240.4 1221.9,1242.5 1227.0,1244.7 1232.0,1260.0 1231.6,1257.1 1232.1,1264.6 1227.9,1267.9 1222.1,1266.3 1218.8,1270.9 1211.3,1274.1 1202.2,1270.1 1199.7,1271.2 1195.6,1269.1 1188.9,1271.2 1185.6,1273.7 1169.0,1262.1 1158.2,1248.0 1155.7,1237.2 1137.5,1227.3 1127.5,1222.8 1121.7,1223.4 1114.3,1214.8 1098.5,1216.5 1099.3,1210.7 1108.4,1209.0 1109.3,1205.7 1104.3,1197.4 1100.1,1189.1 1096.8,1185.8 1086.9,1182.1 1071.1,1185.4 1056.2,1187.1 1051.2,1189.9 1044.6,1185.3 1021.3,1191.2 1013.0,1187.1 1003.1,1187.1 961.6,1212.3 959.1,1217.3 965.7,1228.9 979.8,1238.9 989.0,1255.5 998.1,1260.9 1002.2,1266.8 1010.5,1265.9 1011.7,1260.9 1013.0,1266.3 1021.3,1265.4 1029.6,1262.6 1032.1,1259.6 1037.9,1258.0 1042.1,1255.0 1041.2,1258.8 1044.6,1260.9 1039.6,1258.8 1037.9,1260.9 1049.5,1272.6 1051.2,1277.9 1054.5,1281.5 1062.8,1282.5 1067.8,1286.2 1078.6,1295.6 1096.0,1292.0 1106.8,1292.0 1115.4,1272.1 1114.3,1270.4 1115.9,1264.3 1130.8,1259.6 1142.5,1269.6 1149.1,1270.9 1153.3,1273.7 1157.4,1281.2 1169.0,1287.0 1183.1,1292.8 1186.4,1293.1 1198.1,1287.8 1202.2,1287.0 1205.5,1290.3 1213.0,1288.2 1215.5,1296.1 1217.1,1298.6 1215.5,1300.3 1218.8,1314.4 1211.3,1316.0 1205.5,1304.4 1197.2,1302.8 1194.7,1312.7 1192.3,1305.3 1186.4,1307.7 1188.9,1311.1 1193.1,1316.9 1183.1,1312.7 1178.1,1308.6 1175.7,1311.1 1179.0,1314.4 1181.5,1319.4 1166.5,1308.6 1152.4,1305.3 1145.8,1291.1 1141.6,1288.2 1130.5,1285.8 1126.7,1288.7 1125.9,1301.1 1123.4,1306.1 1108.4,1309.4 1097.7,1316.0 1095.2,1321.0 1090.2,1321.0 1078.6,1316.9 1077.7,1322.3 1075.3,1316.9 1064.5,1313.6 1063.6,1318.5 1059.5,1316.0 1054.5,1316.0 1049.5,1313.6 1039.6,1305.3 1034.6,1301.9 1019.7,1298.6 1008.9,1293.6 994.8,1284.5 985.6,1280.9 980.7,1280.9 975.7,1284.5 960.7,1290.3 954.1,1289.5 940.0,1297.8 936.0,1298.9 912.7,1306.3 894.1,1314.2 890.4,1311.4 887.6,1314.7 882.0,1311.4 877.3,1311.9 876.4,1318.8 845.7,1330.0 814.9,1349.2 796.3,1361.3 790.7,1361.7 781.4,1371.6 738.5,1397.6 705.0,1414.4 683.5,1427.5 654.7,1439.9 632.3,1448.9 616.5,1451.7 603.4,1450.2 589.4,1450.2 572.7,1453.5 562.4,1458.6 557.8,1458.6 551.2,1463.8 535.4,1465.7 522.4,1470.9 511.7,1471.2 503.7,1471.2 506.0,1471.5Z"/>
<path fill="#d5c486" d="M1522.4,275.2 1547.3,272.4 1582.1,262.4 1622.8,246.6 1635.2,246.6 1636.6,254.1 1630.3,256.6 1622.0,261.6 1615.3,261.6 1610.3,264.9 1604.5,265.7 1598.7,265.7 1603.7,270.7 1601.2,274.0 1582.1,274.9 1567.2,284.8 1555.6,288.1 1545.6,287.3 1535.7,293.1 1529.0,293.1 1517.4,305.6 1512.4,304.7 1508.3,299.7 1506.6,293.1 1509.1,289.0 1517.4,281.5Z M1415.0,366.5 1432.8,357.0 1449.4,340.4 1478.4,323.5 1487.5,323.0 1492.5,326.0 1490.8,329.6 1482.6,330.4 1470.9,337.9 1453.5,344.6 1456.0,353.7 1442.7,362.0 1436.9,370.3 1421.1,370.3Z M1497.8,329.1 1505.0,324.6 1507.4,325.1 1501.6,332.4Z M1417.0,385.7 1423.6,393.5 1423.6,398.5 1427.8,399.3 1433.6,410.9 1431.1,419.2 1430.3,437.5 1427.8,441.6 1424.5,444.1 1422.0,453.3 1416.2,460.7 1406.2,465.7 1397.9,475.8 1394.6,476.6 1386.3,474.1 1390.4,479.1 1387.1,482.4 1377.2,485.2 1373.0,480.7 1370.5,473.3 1371.4,460.0 1373.0,455.7 1376.3,444.1 1386.3,425.9 1401.2,403.5 1413.7,386.9Z M1645.0,246.6 1650.0,258.3 1656.6,263.2 1667.4,263.2 1676.6,259.1 1683.2,254.1 1697.3,258.3 1731.3,249.6 1732.1,246.6Z M1776.1,246.6 1778.6,254.1 1781.9,250.0 1782.3,246.6Z M1102.2,1065.8 1097.8,1077.3 1095.7,1083.8 1098.5,1091.0 1100.0,1096.1 1106.5,1095.4 1110.1,1090.3 1126.7,1084.5 1141.1,1087.4 1148.3,1096.8 1149.0,1114.1 1151.2,1114.8 1157.0,1129.3 1157.7,1132.2 1178.6,1133.6 1190.2,1140.1 1192.3,1143.7 1193.8,1145.9 1212.5,1155.2 1221.9,1159.6 1232.0,1160.3 1243.6,1157.4 1254.4,1152.4 1259.4,1142.3 1264.5,1140.1 1265.9,1133.6 1260.9,1135.0 1255.1,1133.6 1243.6,1135.0 1232.0,1127.8 1223.4,1123.5 1214.7,1113.4 1205.3,1101.8 1202.4,1099.0 1195.9,1098.2 1172.9,1086.0 1164.2,1081.6 1155.5,1073.7 1154.1,1065.8Z M1037.9,1135.0 1038.7,1129.3 1044.4,1120.6 1069.0,1112.7 1085.6,1114.8 1085.3,1106.9 1097.8,1103.3 1101.0,1109.1 1089.9,1108.8 1087.4,1114.8 1106.5,1113.7 1113.0,1119.9 1122.4,1118.4 1131.0,1119.2 1135.3,1123.5 1136.8,1127.8 1144.0,1135.0 1146.2,1142.3 1152.7,1144.4 1159.9,1146.6 1173.6,1159.6 1171.4,1165.3 1158.4,1175.4 1154.1,1174.0 1133.9,1181.2 1128.1,1179.8 1120.2,1170.4 1114.4,1172.6 1105.0,1170.4 1105.0,1161.0 1100.7,1155.2 1097.1,1149.5 1084.8,1143.7 1084.1,1140.1 1081.2,1137.9 1076.2,1140.1 1074.0,1142.3 1063.9,1148.0 1053.1,1150.9 1045.2,1149.5 1040.1,1143.7Z M1111.5,1099.7 1120.2,1090.3 1129.6,1099.7 1123.8,1096.8 1116.6,1097.8Z M1120.2,1113.4 1131.0,1111.7 1129.6,1115.6 1123.8,1115.6Z M1113.0,1116.3 1118.7,1115.6 1120.2,1119.2 1114.4,1119.5Z M1134.6,1108.3 1140.4,1107.6 1145.4,1119.2 1145.4,1124.2 1141.8,1122.0 1137.5,1113.4Z M1128.6,1085.7 1133.2,1086.4 1132.7,1088.1 1128.8,1087.4Z M1050.2,1158.1 1054.5,1157.4 1055.3,1161.0 1052.4,1160.3Z M1046.2,1166.5 1050.9,1163.2 1051.6,1165.3 1048.0,1168.9Z M1174.3,1148.7 1188.7,1146.6 1191.6,1145.1 1188.0,1149.5 1175.7,1150.6Z M1187.3,1086.0 1191.6,1085.3 1192.3,1088.1 1189.5,1089.6Z M1224.8,1111.9 1229.9,1109.8 1243.6,1114.1 1252.2,1118.4 1253.7,1122.0 1249.3,1124.9 1237.8,1124.2 1232.0,1120.6Z M1247.9,1129.3 1251.5,1127.5 1255.1,1131.0 1249.3,1130.7Z M1015.5,1292.0 1018.0,1288.2 1018.8,1290.3 1016.7,1293.1Z"/>
<path fill="#9bb8f0" d="M1774.8,374.8 1782.8,376.1 1784.1,383.6 1779.4,387.4 1776.5,384.4Z M1781.9,394.3 1789.1,395.5 1789.1,401.8 1784.8,403.1 1782.3,401.0Z M1737.6,412.6 1747.6,407.3 1751.2,414.3 1754.1,422.6 1751.6,425.0 1745.4,425.9 1741.6,421.7 1740.4,415.1Z M1979.4,402.6 1983.6,404.3 1986.6,409.3 1984.4,415.9 1980.3,419.7 1976.1,418.9 1972.8,412.6 1976.1,408.4Z M1705.6,456.2 1710.1,461.6 1706.4,467.7 1703.9,464.0Z M1689.0,460.7 1694.0,454.9 1699.0,454.1 1699.8,470.0 1699.0,471.6 1694.8,474.6 1693.1,469.1 1688.2,467.5Z M1705.6,460.0 1709.7,461.7 1708.9,465.0 1705.1,467.5 1704.4,463.3Z M1682.4,494.0 1685.7,490.7 1689.8,491.5 1694.8,491.5 1695.6,494.9 1689.8,499.3 1684.9,498.2Z M1673.2,498.5 1677.4,499.5 1678.5,506.5 1677.4,509.8 1678.5,513.9 1674.1,513.9 1670.4,508.1Z M1698.1,523.9 1713.1,522.6 1720.5,523.9 1722.5,526.4 1722.5,534.7 1718.0,540.0 1694.8,543.3 1692.3,540.5 1694.0,536.7 1699.8,532.5 1694.8,531.4Z M1678.2,533.5 1679.9,533.9 1679.0,546.3 1673.2,549.1Z M1797.4,614.3 1800.2,612.3 1802.7,616.0 1803.0,621.8 1805.5,625.1 1800.2,624.8 1797.7,621.0Z M1755.7,626.0 1758.7,627.6 1761.2,635.1 1756.7,635.9Z M1771.1,629.3 1782.8,624.3 1789.1,624.8 1789.9,631.8 1776.1,640.1 1770.8,637.6Z M1777.8,642.6 1791.1,635.9 1801.8,635.1 1800.2,640.1 1796.0,641.7 1797.7,646.7 1792.7,649.2 1789.4,648.4 1791.1,643.4Z M1735.5,671.1 1756.2,662.5 1764.5,652.2 1775.3,659.1 1774.5,664.1 1763.7,670.8 1755.4,671.6 1746.3,676.6 1739.6,674.1Z M1427.5,537.2 1435.3,533.9 1441.4,540.5 1441.1,543.8 1437.4,545.8 1432.8,539.7Z M1615.3,491.5 1620.3,482.4 1629.4,479.6 1623.6,484.1 1622.0,487.4 1627.8,490.7 1622.8,489.0Z M1617.0,497.3 1625.3,494.0 1627.8,496.5 1618.6,499.8Z M1597.1,533.0 1603.7,531.0 1597.9,541.0Z M1608.7,518.1 1615.3,517.3 1641.9,501.5 1650.0,498.2 1650.0,505.6 1638.5,510.6 1618.6,520.6 1614.5,526.4 1613.7,531.4 1609.5,533.0 1607.0,528.9Z M1646.8,523.9 1650.0,518.1 1658.3,513.1 1664.1,512.3 1665.3,514.8 1664.1,523.9 1653.3,531.4 1650.0,531.4 1648.5,529.7Z M2033.5,246.6 2031.5,265.7 2034.8,271.5 2039.8,296.4 2046.4,300.6 2053.9,308.0 2063.0,313.0 2077.1,318.3 2084.6,318.8 2086.3,321.3 2102.0,317.2 2096.2,323.0 2097.0,330.4 2095.4,336.3 2099.5,342.1 2135.2,352.5 2141.8,339.6 2142.7,329.6 2141.0,324.6 2145.2,318.0 2146.8,309.7 2154.3,307.7 2146.0,304.7 2130.2,304.4 2123.6,301.9 2087.9,303.4 2077.1,301.4 2072.1,296.4 2071.3,290.6 2075.5,278.2 2073.0,274.9 2073.8,261.6 2075.5,246.6Z M2010.7,339.2 2020.7,329.6 2022.4,338.2Z M2154.3,252.4 2157.6,246.6 2161.8,246.6 2162.6,259.9 2159.3,259.6 2157.6,254.9Z M2150.6,259.9 2155.1,259.1 2155.6,263.7 2151.3,262.7Z M2376.5,367.8 2382.2,356.8 2388.8,362.8 2384.8,370.1Z M2430.6,246.6 2438.0,258.3 2446.2,259.9 2459.5,251.6 2460.5,246.6Z M2522.6,246.6 2521.9,259.9 2524.2,271.5 2527.6,272.2 2526.2,246.6Z M2488.2,696.8 2497.6,696.8 2502.7,706.5 2500.5,710.5 2500.1,714.8 2494.0,718.4 2492.2,716.6 2487.5,714.8 2485.3,706.2 2486.4,699.7Z M2423.8,1233.3 2431.2,1234.2 2435.1,1232.7 2439.0,1234.2 2455.4,1230.1 2464.1,1232.9 2466.7,1238.1 2455.4,1234.2 2442.4,1238.3 2435.9,1236.8 2432.5,1239.0 2441.1,1244.2 2432.0,1245.9 2426.4,1240.7 2427.7,1235.9Z"/>
<path fill="none" stroke-width="3" d="M2154.3,307.7 2173.4,308.9 2177.5,313.0 2176.7,316.3 2179.2,318.8 2189.1,321.3 2192.5,326.3 2193.3,350.4 2202.4,354.5 2202.4,358.7"/>
<path fill="none" d="M1834.2,297.3 1837.5,303.1 1847.5,300.6 1857.4,304.7"/>
</g>
<path d="M632.9,284.2h21M643.4,273.7v21M632.9,512.8h21M643.4,502.3v21M632.9,741.4h21M643.4,730.9v21M632.9,970.0h21M643.4,959.5v21M632.9,1198.6h21M643.4,1188.1v21M632.9,1427.2h21M643.4,1416.7v21M861.3,284.2h21M871.8,273.7v21M861.3,512.8h21M871.8,502.3v21M861.3,741.4h21M871.8,730.9v21M861.3,970.0h21M871.8,959.5v21M861.3,1198.6h21M871.8,1188.1v21M861.3,1427.2h21M871.8,1416.7v21M1089.8,284.2h21M1100.3,273.7v21M1089.8,512.8h21M1100.3,502.3v21M1089.8,741.4h21M1100.3,730.9v21M1089.8,970.0h21M1100.3,959.5v21M1089.8,1198.6h21M1100.3,1188.1v21M1089.8,1427.2h21M1100.3,1416.7v21M1318.2,284.2h21M1328.8,273.7v21M1318.2,512.8h21M1328.8,502.3v21M1318.2,741.4h21M1328.8,730.9v21M1318.2,970.0h21M1328.8,959.5v21M1318.2,1198.6h21M1328.8,1188.1v21M1318.2,1427.2h21M1328.8,1416.7v21M1546.7,284.2h21M1557.2,273.7v21M1546.7,512.8h21M1557.2,502.3v21M1546.7,741.4h21M1557.2,730.9v21M1546.7,970.0h21M1557.2,959.5v21M1546.7,1198.6h21M1557.2,1188.1v21M1546.7,1427.2h21M1557.2,1416.7v21M1775.2,284.2h21M1785.7,273.7v21M1775.2,512.8h21M1785.7,502.3v21M1775.2,741.4h21M1785.7,730.9v21M1775.2,970.0h21M1785.7,959.5v21M1775.2,1198.6h21M1785.7,1188.1v21M1775.2,1427.2h21M1785.7,1416.7v21M2003.6,284.2h21M2014.1,273.7v21M2003.6,512.8h21M2014.1,502.3v21M2003.6,741.4h21M2014.1,730.9v21M2003.6,970.0h21M2014.1,959.5v21M2003.6,1198.6h21M2014.1,1188.1v21M2003.6,1427.2h21M2014.1,1416.7v21M2232.0,284.2h21M2242.5,273.7v21M2232.0,512.8h21M2242.5,502.3v21M2232.0,741.4h21M2242.5,730.9v21M2232.0,970.0h21M2242.5,959.5v21M2232.0,1198.6h21M2242.5,1188.1v21M2232.0,1427.2h21M2242.5,1416.7v21M2460.5,284.2h21M2471.0,273.7v21M2460.5,512.8h21M2471.0,502.3v21M2460.5,741.4h21M2471.0,730.9v21M2460.5,970.0h21M2471.0,959.5v21M2460.5,1198.6h21M2471.0,1188.1v21M2460.5,1427.2h21M2471.0,1416.7v21" stroke="#000" stroke-opacity=".5" stroke-width="1.4" fill="none"/>
<g font-family="Liberation Serif, serif" font-size="20" fill="#111" stroke="#111" stroke-width=".35">
<text x="526" y="277.2">N 600000</text>
<text x="526" y="505.8">N 550000</text>
<text x="526" y="734.4">N 500000</text>
<text x="526" y="963.0">N 450000</text>
<text x="526" y="1191.6">N 400000</text>
<text x="526" y="1420.2">N 350000</text>
<text transform="translate(649.4,1556) rotate(90)" text-anchor="end">E -50000</text>
<text transform="translate(877.8,1556) rotate(90)" text-anchor="end">E 0</text>
<text transform="translate(1106.3,1556) rotate(90)" text-anchor="end">E 50000</text>
<text transform="translate(1334.8,1556) rotate(90)" text-anchor="end">E 100000</text>
<text transform="translate(1563.2,1556) rotate(90)" text-anchor="end">E 150000</text>
<text transform="translate(1791.7,1556) rotate(90)" text-anchor="end">E 200000</text>
<text transform="translate(2020.1,1556) rotate(90)" text-anchor="end">E 250000</text>
<text transform="translate(2248.5,1556) rotate(90)" text-anchor="end">E 300000</text>
<text transform="translate(2477.0,1556) rotate(90)" text-anchor="end">E 350000</text>
</g>
<g><text x="604.6" y="327.7" font-family="Liberation Sans, sans-serif" font-size="27" textLength="17.5" lengthAdjust="spacingAndGlyphs" fill="#26324e">N</text><path d="M612.4,329.4 L593.3,390.4 L612.4,377.4Z" fill="#fff" stroke="#111" stroke-width="1"/><path d="M612.4,329.4 L631.9,389.6 L612.4,377.4Z" fill="#000" stroke="#000" stroke-width="1"/></g>
<defs><linearGradient id="cs" x1="0" y1="0" x2="0" y2="1"><stop offset="0" stop-color="#f2003c"/><stop offset=".17" stop-color="#f00000"/><stop offset=".30" stop-color="#f06000"/><stop offset=".43" stop-color="#f0c000"/><stop offset=".50" stop-color="#e6e600"/><stop offset=".58" stop-color="#a0e800"/><stop offset=".66" stop-color="#30e000"/><stop offset=".74" stop-color="#00d860"/><stop offset=".82" stop-color="#00d0d0"/><stop offset=".88" stop-color="#0080e0"/><stop offset=".93" stop-color="#0030e0"/><stop offset=".96" stop-color="#1000d0"/><stop offset="1" stop-color="#c000d0"/></linearGradient></defs>
</svg><div id="cs" style="left:2560.7px;top:413.6px;width:71.7px;height:988.8px;background:linear-gradient(rgb(240,0,60) 0.0%,rgb(238,0,0) 5.7%,rgb(240,100,0) 14.1%,rgb(240,178,0) 19.0%,rgb(230,235,0) 24.9%,rgb(172,234,0) 29.0%,rgb(112,230,0) 34.0%,rgb(52,225,0) 39.0%,rgb(0,221,0) 44.0%,rgb(0,225,70) 49.0%,rgb(0,225,140) 54.0%,rgb(0,216,186) 59.3%,rgb(0,200,220) 64.0%,rgb(0,132,216) 69.0%,rgb(0,70,214) 74.0%,rgb(0,15,205) 79.0%,rgb(25,0,200) 84.0%,rgb(80,0,205) 89.0%,rgb(140,0,210) 94.0%,rgb(196,0,216) 100.0%)"><span style="top:-0.1px;color:#7896ac">0.00</span><span style="top:81.3px;color:#4d6a99">-2.50</span><span style="top:130.7px;color:#4a5a98">-3.75</span><span style="top:180.1px;color:#3b3b7c">-5.00</span><span style="top:229.5px;color:#1c1c5e">-6.25</span><span style="top:278.9px;color:#3a2c6c">-7.50</span><span style="top:328.3px;color:#593a6c">-8.75</span><span style="top:377.7px;color:#783a7a">-10.00</span><span style="top:427.1px;color:#7a3a7a">-11.25</span><span style="top:476.5px;color:#7c3a6a">-12.50</span><span style="top:525.9px;color:#8a3a44">-13.75</span><span style="top:575.3px;color:#8a3a3a">-15.00</span><span style="top:624.7px;color:#8a3c3a">-16.25</span><span style="top:674.1px;color:#9a5a3c">-17.50</span><span style="top:723.5px;color:#b08a4a">-18.75</span><span style="top:772.9px;color:#c0ae42">-20.00</span><span style="top:822.3px;color:#bfb040">-21.25</span><span style="top:871.7px;color:#a2b040">-22.50</span><span style="top:921.1px;color:#72a240">-23.75</span><span style="top:970.5px;color:#60a040">-25.00</span></div><div id="rp"><div class="ph">Properties</div>
<svg class="pin" style="left:296px;top:10px" viewBox="0 0 9 12"><path d="M2,1h5M2.8,1v5M6.2,1v5M0.8,6.5h7.4M4.5,6.5v5" stroke="#2d3036" stroke-width="1.3" fill="none"/><path d="M5,1.5h1v4.5h-1z" fill="#2d3036"/></svg>
<svg class="pin" style="left:319px;top:11px;width:12px;height:10px" viewBox="0 0 12 10"><path d="M1.5,1l9,8M10.5,1l-9,8" stroke="#2d3036" stroke-width="2.2"/></svg>
<div class="pg"><div class="cat">Session information<svg width="11" height="8" viewBox="0 0 11 8" style="position:absolute;right:9px;top:9px"><path d="M1.5,6.5l4-4.5 4,4.5" stroke="#33363c" stroke-width="2" fill="none"/></svg></div>
<div class="pr" style="top:26.0px"><span class="n dk">Description</span><span class="v"></span></div>
<div class="pr" style="top:53.5px"><span class="n">File size</span><span class="v">0 bytes</span></div>
<div class="pr" style="top:81.0px"><span class="n">Name</span><span class="v"></span></div>
<div class="pr" style="top:108.5px"><span class="n">Number of files</span><span class="v">0</span></div>
</div>
<div class="btabs"><div class="bt" style="left:0;width:193px"><svg width="22" height="22" viewBox="0 0 22 22" style="left:19px;top:5px"><path d="M1,11l2,10 2.5-3 3,4 2-1.2-3-4 4-.8z" fill="#e8e8ea" stroke="#9a9da2" stroke-width="1"/><circle cx="12" cy="8" r="7.5" fill="#2b9ae8"/><circle cx="10" cy="5.5" r="4" fill="#7cc8f8" fill-opacity=".7"/><text x="12" y="12.5" font-size="12" font-weight="bold" fill="#fff" text-anchor="middle" font-family="Liberation Sans, sans-serif">?</text></svg><span style="left:47px">Cursor information</span></div>
<div class="bt act" style="left:193px;width:131px"><svg width="18" height="21" viewBox="0 0 18 21" style="left:18px;top:6px"><rect x=".5" y=".5" width="17" height="20" fill="#c3c4ec" stroke="#b0b1dc"/><path d="M3,4h9M3,7.5h7M3,11h9M3,14.5h7" stroke="#9a9bd0" stroke-width="1.2"/><path d="M10,7h6v2h-6zM10,14h6v2h-6z" fill="#fff"/></svg><span style="left:43px">Properties</span></div></div>
</div><div id="sb"><i class="sep"></i><svg width="14" height="14" viewBox="0 0 14 14" style="position:absolute;right:3px;bottom:3px" fill="#9a9ea6"><rect x="10" y="0" width="2.5" height="2.5"/><rect x="5" y="5" width="2.5" height="2.5"/><rect x="10" y="5" width="2.5" height="2.5"/><rect x="0" y="10" width="2.5" height="2.5"/><rect x="5" y="10" width="2.5" height="2.5"/><rect x="10" y="10" width="2.5" height="2.5"/></svg></div><div id="dlg"><div class="dt">Survey Manager</div><div class="di">
<div class="wi"><svg width="35" height="29" viewBox="0 0 35 29"><defs><linearGradient id="wg" x1="0" y1="0" x2="0" y2="1"><stop offset="0" stop-color="#fdeed2"/><stop offset=".55" stop-color="#f6c580"/><stop offset="1" stop-color="#ec9f42"/></linearGradient></defs><path d="M15.6,2.4Q17.5,-.2 19.4,2.4L33.6,24.8Q34.8,27.8 31.8,27.8H3.2Q.2,27.8 1.4,24.8Z" fill="url(#wg)" stroke="#d38a34" stroke-width="1.2" stroke-linejoin="round"/><path d="M15.6,8.5h3.8l-.9,11h-2z" fill="#1e2438"/><circle cx="17.5" cy="22.8" r="2" fill="#1e2438"/></svg></div>
<div class="msg">The Survey Manager was not shut down properly while using the session 'Temporary Project session_(EM2040D Rotterdam)'.<br>If this happens more often please reach out to <u>www.qps.nl/support</u></div>
<div class="db foc" style="top:58.5px"><div class="bi"><svg width="28" height="37" viewBox="0 0 28 37"><defs><radialGradient id="bg1" cx=".5" cy=".5" r=".55"><stop offset="0" stop-color="#ffffe0"/><stop offset=".3" stop-color="#fff650"/><stop offset="1" stop-color="#f6e800"/></radialGradient></defs><circle cx="14" cy="13.8" r="11.6" fill="url(#bg1)" stroke="#989898" stroke-width="2.6"/><path d="M8,30.5l12-2M8,34.5l12-2" stroke="#a2a2a2" stroke-width="2.3"/></svg></div><span>Continue with the automatically saved session Temporary Project session_(EM2040D Rotterdam), last modified on 12/09/2023 22:39:13.</span></div>
<div class="db" style="top:122.1px"><div class="bi"><svg width="28" height="37" viewBox="0 0 28 37"><defs><radialGradient id="bg1" cx=".5" cy=".5" r=".55"><stop offset="0" stop-color="#ffffe0"/><stop offset=".3" stop-color="#fff650"/><stop offset="1" stop-color="#f6e800"/></radialGradient></defs><circle cx="14" cy="13.8" r="11.6" fill="url(#bg1)" stroke="#989898" stroke-width="2.6"/><path d="M8,30.5l12-2M8,34.5l12-2" stroke="#a2a2a2" stroke-width="2.3"/></svg></div><span>Open the backup of the previously used session Temporary Project session_(EM2040D Rotterdam), last modified on 12/09/2023 20:13:17.</span></div>
<div class="db" style="top:185.7px"><div class="bi"><svg width="28" height="37" viewBox="0 0 28 37"><defs><radialGradient id="bg1" cx=".5" cy=".5" r=".55"><stop offset="0" stop-color="#ffffe0"/><stop offset=".3" stop-color="#fff650"/><stop offset="1" stop-color="#f6e800"/></radialGradient></defs><circle cx="14" cy="13.8" r="11.6" fill="url(#bg1)" stroke="#989898" stroke-width="2.6"/><path d="M8,30.5l12-2M8,34.5l12-2" stroke="#a2a2a2" stroke-width="2.3"/></svg></div><span>Select a session in the Session Manager.</span></div>
<div class="db" style="top:249.3px"><div class="bi"><svg width="28" height="37" viewBox="0 0 28 37"><defs><radialGradient id="bg1" cx=".5" cy=".5" r=".55"><stop offset="0" stop-color="#ffffe0"/><stop offset=".3" stop-color="#fff650"/><stop offset="1" stop-color="#f6e800"/></radialGradient></defs><circle cx="14" cy="13.8" r="11.6" fill="url(#bg1)" stroke="#989898" stroke-width="2.6"/><path d="M8,30.5l12-2M8,34.5l12-2" stroke="#a2a2a2" stroke-width="2.3"/></svg></div><span>Restore defaults (not recommended).</span></div>
</div></div>
<svg id="cur" width="22" height="34" viewBox="0 0 22 34"><path d="M1.5,1.5v25l5.8-5.6 4.3,10.3 4-1.7-4.4-10 8.3-.2z" fill="#fff" stroke="#000" stroke-width="1.8" stroke-linejoin="round"/></svg></body></html>
